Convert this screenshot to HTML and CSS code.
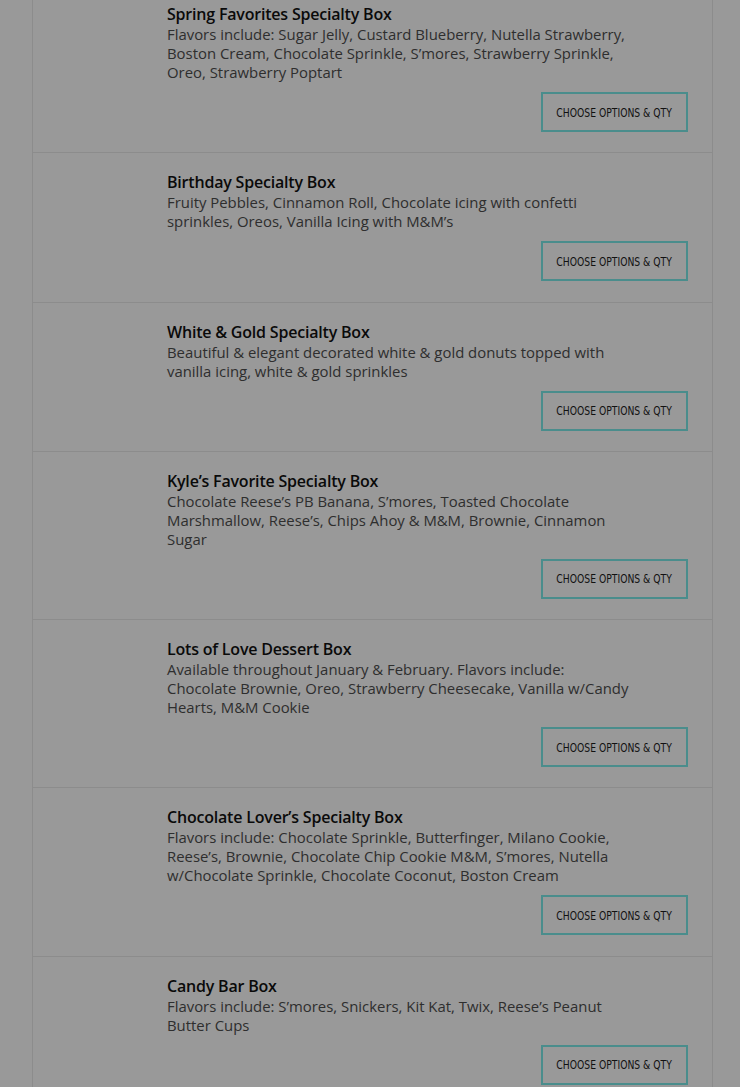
FILE: index.html
```html
<!DOCTYPE html>
<html>
<head>
<meta charset="utf-8">
<link rel="stylesheet" href="styles.css">
</head>
<body>
<div class="list">
  <div class="item">
    <div class="thumb"></div>
    <div class="info">
      <h3 class="title">Spring Favorites Specialty Box</h3>
      <p class="desc">Flavors include: Sugar Jelly, Custard Blueberry, Nutella Strawberry, Boston Cream, Chocolate Sprinkle, S’mores, Strawberry Sprinkle, Oreo, Strawberry Poptart</p>
      <a class="btn"><span class="btn-label">Choose Options &amp; Qty</span></a>
    </div>
  </div>
  <div class="item">
    <div class="thumb"></div>
    <div class="info">
      <h3 class="title">Birthday Specialty Box</h3>
      <p class="desc">Fruity Pebbles, Cinnamon Roll, Chocolate icing with confetti sprinkles, Oreos, Vanilla Icing with M&amp;M’s</p>
      <a class="btn"><span class="btn-label">Choose Options &amp; Qty</span></a>
    </div>
  </div>
  <div class="item">
    <div class="thumb"></div>
    <div class="info">
      <h3 class="title">White &amp; Gold Specialty Box</h3>
      <p class="desc">Beautiful &amp; elegant decorated white &amp; gold donuts topped with vanilla icing, white &amp; gold sprinkles</p>
      <a class="btn"><span class="btn-label">Choose Options &amp; Qty</span></a>
    </div>
  </div>
  <div class="item">
    <div class="thumb"></div>
    <div class="info">
      <h3 class="title">Kyle’s Favorite Specialty Box</h3>
      <p class="desc">Chocolate Reese’s PB Banana, S’mores, Toasted Chocolate Marshmallow, Reese’s, Chips Ahoy &amp; M&amp;M, Brownie, Cinnamon Sugar</p>
      <a class="btn"><span class="btn-label">Choose Options &amp; Qty</span></a>
    </div>
  </div>
  <div class="item">
    <div class="thumb"></div>
    <div class="info">
      <h3 class="title">Lots of Love Dessert Box</h3>
      <p class="desc">Available throughout January &amp; February. Flavors include: Chocolate Brownie, Oreo, Strawberry Cheesecake, Vanilla w/Candy Hearts, M&amp;M Cookie</p>
      <a class="btn"><span class="btn-label">Choose Options &amp; Qty</span></a>
    </div>
  </div>
  <div class="item">
    <div class="thumb"></div>
    <div class="info">
      <h3 class="title">Chocolate Lover’s Specialty Box</h3>
      <p class="desc">Flavors include: Chocolate Sprinkle, Butterfinger, Milano Cookie, Reese’s, Brownie, Chocolate Chip Cookie M&amp;M, S’mores, Nutella w/Chocolate Sprinkle, Chocolate Coconut, Boston Cream</p>
      <a class="btn"><span class="btn-label">Choose Options &amp; Qty</span></a>
    </div>
  </div>
  <div class="item">
    <div class="thumb"></div>
    <div class="info">
      <h3 class="title">Candy Bar Box</h3>
      <p class="desc">Flavors include: S’mores, Snickers, Kit Kat, Twix, Reese’s Peanut Butter Cups</p>
      <a class="btn"><span class="btn-label">Choose Options &amp; Qty</span></a>
    </div>
  </div>
</div>
</body>
</html>
```
FILE: styles.css
```css
html, body {
  margin: 0;
  padding: 0;
  background: #999999;
  height: 1087px;
  overflow: hidden;
}
body {
  font-family: "Open Sans", "Liberation Sans", sans-serif;
}
.list {
  margin: -15px 0 0 32px;
  width: 681px;
  box-sizing: border-box;
  border-left: 1px solid #8c8c8c;
  border-right: 1px solid #8c8c8c;
}
.item {
  display: grid;
  grid-template-columns: 134px 1fr;
  padding: 19px 24px 20.25px 0;
  border-bottom: 1px solid #8c8c8c;
}
.info {
  display: flex;
  flex-direction: column;
}
.title {
  margin: 0;
  font-size: 16px;
  font-weight: 600;
  line-height: 21px;
  color: #0a0a0a;
  letter-spacing: -0.2px;
}
.desc {
  margin: 0;
  max-width: 463px;
  font-size: 14.9px;
  line-height: 19px;
  color: #2e2e2e;
}
.btn {
  align-self: flex-end;
  margin-top: 10px;
  width: 147px;
  height: 40px;
  box-sizing: border-box;
  border: 2px solid #4a8d8c;
  display: flex;
  align-items: center;
  justify-content: center;
  color: #111;
}
.btn-label {
  display: inline-block;
  white-space: nowrap;
  font-family: "DejaVu Sans Condensed", "DejaVu Sans", sans-serif;
  font-stretch: condensed;
  font-size: 13px;
  text-transform: uppercase;
  transform: scaleX(0.79);
}
```
